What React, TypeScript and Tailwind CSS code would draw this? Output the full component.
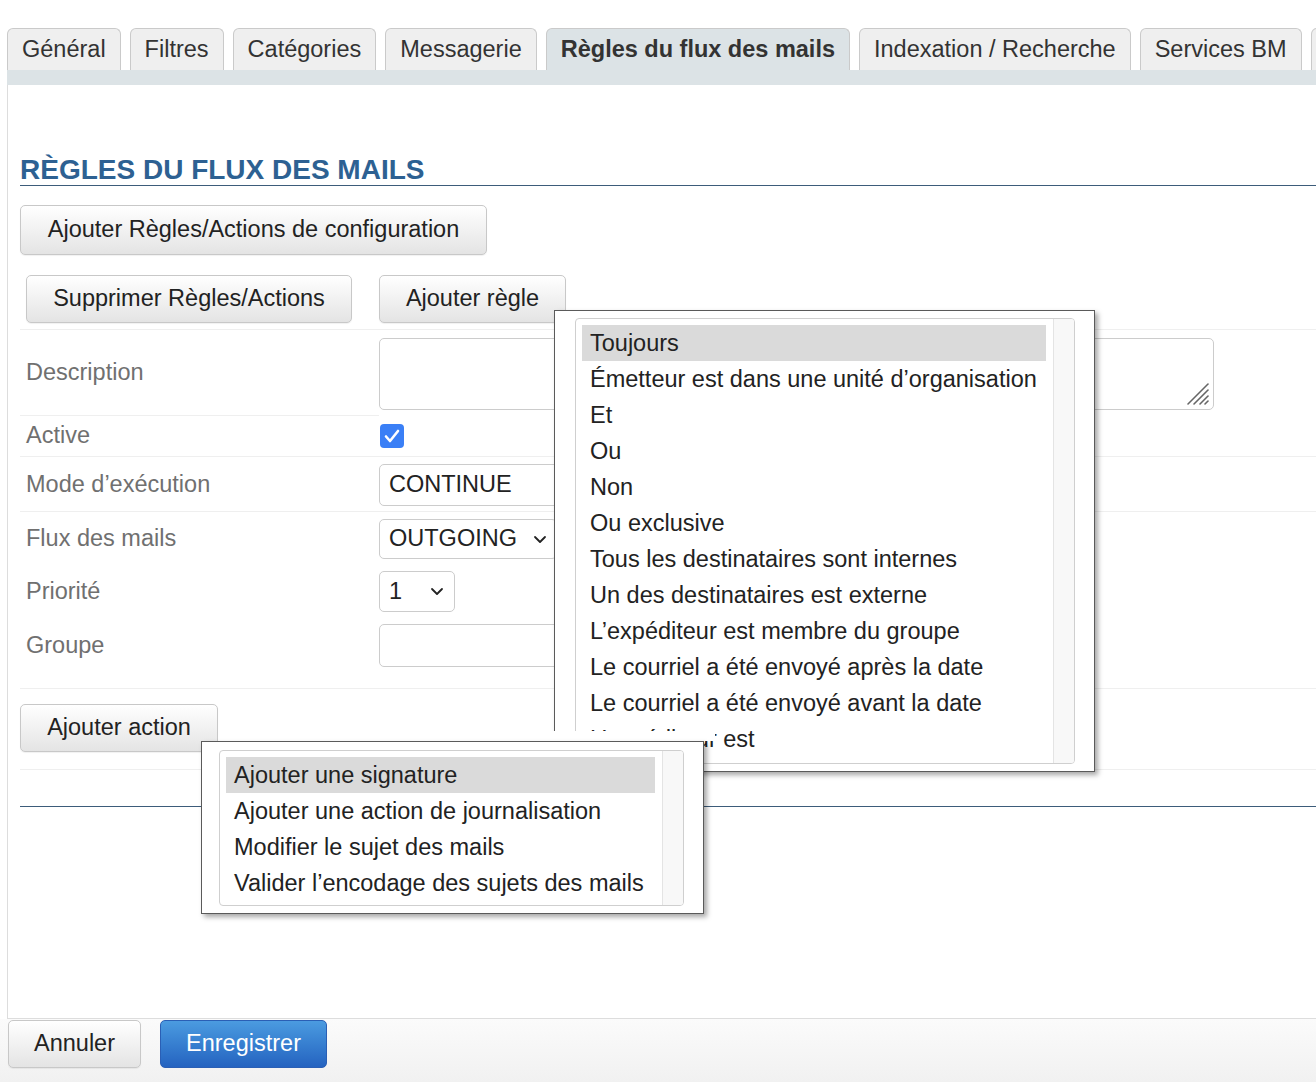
import React from "react";

const tabs = [
  "Général",
  "Filtres",
  "Catégories",
  "Messagerie",
  "Règles du flux des mails",
  "Indexation / Recherche",
  "Services BM",
  "",
];

const rules = [
  "Toujours",
  "Émetteur est dans une unité d’organisation",
  "Et",
  "Ou",
  "Non",
  "Ou exclusive",
  "Tous les destinataires sont internes",
  "Un des destinataires est externe",
  "L’expéditeur est membre du groupe",
  "Le courriel a été envoyé après la date",
  "Le courriel a été envoyé avant la date",
  "L’expéditeur est",
];

const actions = [
  "Ajouter une signature",
  "Ajouter une action de journalisation",
  "Modifier le sujet des mails",
  "Valider l’encodage des sujets des mails",
];

function Chevron() {
  return (
    <svg width="14" height="9" viewBox="0 0 14 9" fill="none">
      <polyline points="2,2 7,7 12,2" stroke="#222" strokeWidth="1.8" strokeLinecap="round" strokeLinejoin="round" />
    </svg>
  );
}

function Btn({ children, className = "" }: { children: React.ReactNode; className?: string }) {
  return (
    <div
      className={
        "flex items-center justify-center rounded-[5px] border border-[#c8c8c8] bg-linear-to-b from-white to-[#e4e4e4] text-[#222] shadow-[0_1px_1px_rgba(0,0,0,0.06)] " +
        className
      }
    >
      {children}
    </div>
  );
}

function ListBox({ items, scrollH }: { items: string[]; scrollH: string }) {
  return (
    <div className={"flex rounded-[4px] border border-[#cfcfcf] bg-white overflow-hidden " + scrollH}>
      <div className="flex-1 pt-[6px] pl-[6px] pr-[7px] overflow-hidden">
        {items.map((t, i) => (
          <div
            key={i}
            className={
              "h-[36px] leading-[36px] pl-[8px] whitespace-nowrap text-[#222] " + (i === 0 ? "bg-[#dadada]" : "")
            }
          >
            {t}
          </div>
        ))}
      </div>
      <div className="w-[21px] border-l border-[#e4e4e4] bg-[#f8f8f8]" />
    </div>
  );
}

export default function App() {
  return (
    <div className="relative w-[1316px] h-[1082px] overflow-hidden bg-white font-['Liberation_Sans',Arial,sans-serif] text-[23.5px] flex flex-col">
      {/* Tabs */}
      <div className="flex items-end gap-[9px] pl-[7px] pt-[28px] h-[70px] whitespace-nowrap">
        {tabs.map((t, i) => (
          <div
            key={i}
            className={
              "h-[42px] px-[14px] flex items-center rounded-t-[6px] border border-b-0 border-[#cacaca] text-[#333] shrink-0 " +
              (i === 4 ? "bg-[#dce3e6] font-bold" : "bg-[#efefef]") +
              (t === "" ? " w-[60px]" : "")
            }
          >
            {t}
          </div>
        ))}
      </div>
      <div className="h-[15px] bg-[#dce3e6] ml-[7px]" />

      {/* Content */}
      <div className="flex-1 ml-[7px] border-l border-b border-[#dddddd] pl-[12px] pt-[69px]">
        <div className="h-[32px] leading-[32px] border-b border-[#3d5c7a] text-[28px] font-bold text-[#2d6192]">
          RÈGLES DU FLUX DES MAILS
        </div>

        <Btn className="mt-[19px] w-[467px] h-[50px]">Ajouter Règles/Actions de configuration</Btn>

        {/* Form */}
        <div className="mt-[20px]">
          <div className="grid grid-cols-[359px_1fr] border-b border-[#efefef] pb-[6px]">
            <div className="pl-[6px]">
              <Btn className="w-[326px] h-[48px]">Supprimer Règles/Actions</Btn>
            </div>
            <div>
              <Btn className="w-[187px] h-[48px]">Ajouter règle</Btn>
            </div>
          </div>

          <div className="grid grid-cols-[359px_1fr]">
            <div className="pl-[6px] flex items-center text-[#707070] border-b border-[#efefef]">Description</div>
            <div className="pt-[8px] pb-[6px]">
              <div className="relative w-[835px] h-[72px] rounded-[5px] border border-[#cccccc]">
                <svg className="absolute right-[3px] bottom-[3px]" width="25" height="25" viewBox="0 0 25 25">
                  <g stroke="#666" strokeWidth="1.6" strokeLinecap="round">
                    <line x1="23" y1="3" x2="3" y2="23" />
                    <line x1="23" y1="9" x2="9" y2="23" />
                    <line x1="23" y1="15" x2="15" y2="23" />
                    <line x1="23" y1="20" x2="20" y2="23" />
                  </g>
                </svg>
              </div>
            </div>
          </div>

          <div className="grid grid-cols-[359px_1fr] border-b border-[#efefef] h-[41px]">
            <div className="pl-[6px] flex items-center text-[#707070]">Active</div>
            <div className="flex items-center">
              <div className="ml-[1px] w-[24px] h-[24px] rounded-[4px] bg-[#3a7ff6] flex items-center justify-center">
                <svg width="16" height="14" viewBox="0 0 16 14" fill="none">
                  <polyline points="2,7.5 6,12 14,2" stroke="white" strokeWidth="2.6" strokeLinecap="round" strokeLinejoin="round" />
                </svg>
              </div>
            </div>
          </div>

          <div className="grid grid-cols-[359px_1fr] border-b border-[#efefef] pt-[7px] pb-[5px]">
            <div className="pl-[6px] flex items-center text-[#707070]">Mode d’exécution</div>
            <div>
              <div className="w-[420px] h-[42px] rounded-[5px] border border-[#cccccc] flex items-center pl-[9px] text-[#222]">
                CONTINUE
              </div>
            </div>
          </div>

          <div className="grid grid-cols-[359px_1fr] pt-[7px]">
            <div className="pl-[6px] flex items-center text-[#707070]">Flux des mails</div>
            <div>
              <div className="w-[178px] h-[40px] rounded-[5px] border border-[#cccccc] flex items-center justify-between pl-[9px] pr-[9px] text-[#222]">
                <span>OUTGOING</span>
                <Chevron />
              </div>
            </div>
          </div>

          <div className="grid grid-cols-[359px_1fr] mt-[12px]">
            <div className="pl-[6px] flex items-center text-[#707070]">Priorité</div>
            <div>
              <div className="w-[76px] h-[41px] rounded-[5px] border border-[#cccccc] flex items-center justify-between pl-[9px] pr-[10px] text-[#222]">
                <span>1</span>
                <Chevron />
              </div>
            </div>
          </div>

          <div className="grid grid-cols-[359px_1fr] mt-[12px] pb-[21px] border-b border-[#efefef]">
            <div className="pl-[6px] flex items-center text-[#707070]">Groupe</div>
            <div>
              <div className="w-[420px] h-[43px] rounded-[5px] border border-[#cccccc]" />
            </div>
          </div>

          <div className="pt-[15px] pb-[17px] border-b border-[#efefef]">
            <Btn className="w-[198px] h-[48px]">Ajouter action</Btn>
          </div>

          <div className="mt-[36px] border-b border-[#3d5c7a]" />
        </div>
      </div>

      {/* Footer */}
      <div className="h-[63px] bg-linear-to-b from-[#fbfbfb] to-[#f1f1f1] flex items-start gap-[19px] pl-[8px] pt-[1px]">
        <Btn className="w-[133px] h-[48px]">Annuler</Btn>
        <div className="w-[167px] h-[48px] rounded-[5px] border border-[#2a5fb5] bg-linear-to-b from-[#4b9be0] to-[#2563c0] text-white flex items-center justify-center">
          Enregistrer
        </div>
      </div>

      {/* Rules dropdown popover */}
      <div className="absolute left-[554px] top-[310px] w-[541px] h-[462px] bg-white border border-[#5a5a5a] shadow-[3px_3px_5px_rgba(0,0,0,0.35)] pl-[20px] pr-[19px] pt-[7px]">
        <ListBox items={rules} scrollH="h-[446px]" />
      </div>

      {/* white cover under actions popover */}
      <div className="absolute left-[545px] top-[731px] w-[170px] h-[10px] bg-white" />

      {/* Actions dropdown popover */}
      <div className="absolute left-[201px] top-[741px] w-[503px] h-[173px] bg-white border border-[#5a5a5a] shadow-[3px_3px_5px_rgba(0,0,0,0.35)] pl-[17px] pr-[19px] pt-[8px]">
        <ListBox items={actions} scrollH="h-[156px]" />
      </div>
    </div>
  );
}
